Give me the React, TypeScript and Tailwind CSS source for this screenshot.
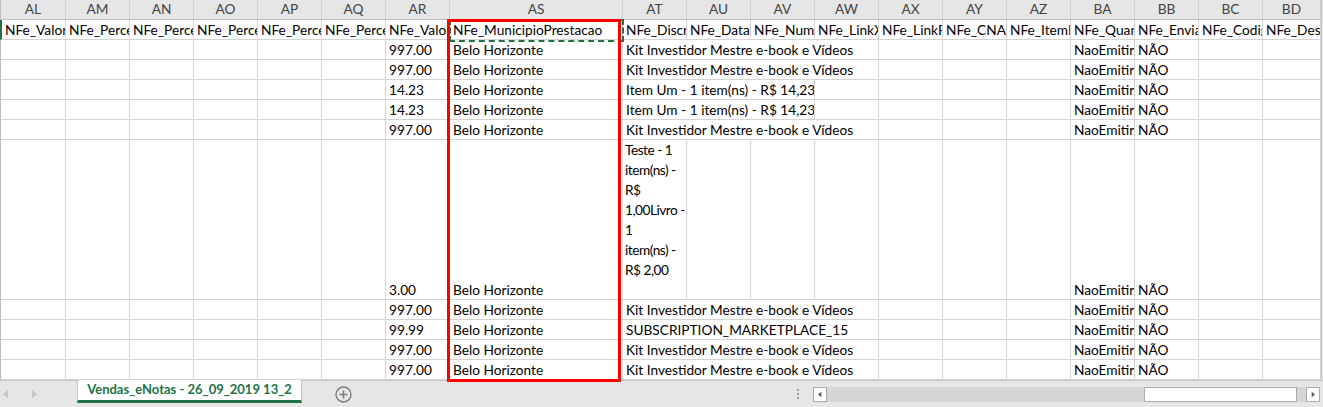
import clsx from 'clsx';

const FONT = "font-['Lato','Liberation_Sans',sans-serif]";

const letters = ['AL', 'AM', 'AN', 'AO', 'AP', 'AQ', 'AR', 'AS', 'AT', 'AU', 'AV', 'AW', 'AX', 'AY', 'AZ', 'BA', 'BB', 'BC', 'BD'];

const headers = [
  'NFe_ValorTotal',
  'NFe_PercentualIR',
  'NFe_PercentualPIS',
  'NFe_PercentualCOFINS',
  'NFe_PercentualCSLL',
  'NFe_PercentualINSS',
  'NFe_ValorISS',
  'NFe_MunicipioPrestacao',
  'NFe_Discriminacao',
  'NFe_Data.Emissao',
  'NFe_Numero',
  'NFe_LinkXml',
  'NFe_LinkPdf',
  'NFe_CNAE',
  'NFe_ItemListaServico',
  'NFe_QuandoEmitir',
  'NFe_EnviarEmail',
  'NFe_CodigoServico',
  'NFe_Descricao',
];

type Row = {
  valor: string;
  municipio: string;
  desc?: string;
  span?: 3 | 4;
  emitir: string;
  tall?: boolean;
};

const KIT = 'Kit Investidor Mestre e-book e Vídeos';
const ITEM = 'Item Um - 1 item(ns) - R$ 14,23';

const rows: Row[] = [
  { valor: '997.00', municipio: 'Belo Horizonte', desc: KIT, span: 4, emitir: 'NaoEmitir' },
  { valor: '997.00', municipio: 'Belo Horizonte', desc: KIT, span: 4, emitir: 'NaoEmitir' },
  { valor: '14.23', municipio: 'Belo Horizonte', desc: ITEM, span: 3, emitir: 'NaoEmitir' },
  { valor: '14.23', municipio: 'Belo Horizonte', desc: ITEM, span: 3, emitir: 'NaoEmitir' },
  { valor: '997.00', municipio: 'Belo Horizonte', desc: KIT, span: 4, emitir: 'NaoEmitir' },
  { valor: '3.00', municipio: 'Belo Horizonte', emitir: 'NaoEmitir', tall: true },
  { valor: '997.00', municipio: 'Belo Horizonte', desc: KIT, span: 4, emitir: 'NaoEmitir' },
  { valor: '99.99', municipio: 'Belo Horizonte', desc: 'SUBSCRIPTION_MARKETPLACE_15', span: 4, emitir: 'NaoEmitir' },
  { valor: '997.00', municipio: 'Belo Horizonte', desc: KIT, span: 4, emitir: 'NaoEmitir' },
  { valor: '997.00', municipio: 'Belo Horizonte', desc: KIT, span: 4, emitir: 'NaoEmitir' },
];

// lines of the wrapped cell in the tall row
const wrapped = ['Teste - 1', 'item(ns) -', 'R$', '1,00Livro -', '1', 'item(ns) -', 'R$ 2,00'];

function Cell({ children, first, tall, span, top }: { children?: React.ReactNode; first?: boolean; tall?: boolean; span?: number; top?: boolean }) {
  return (
    <div
      className={clsx(
        'border-r border-b border-[#d4d4d4] overflow-hidden whitespace-nowrap flex text-[13.7px] text-black',
        tall ? 'h-[160px]' : 'h-[20px]',
        top ? 'items-start leading-[20px] flex-col tracking-[-0.5px] pl-[2px]' : 'items-end leading-[19px] pl-[3px]',
        first && 'border-l border-l-[#bdbdbd]',
        span === 3 && 'col-span-3',
        span === 4 && 'col-span-4',
      )}
    >
      {children}
    </div>
  );
}

function DataRow({ row }: { row: Row }) {
  const cells: React.ReactNode[] = [];
  for (let i = 0; i < 19; i++) {
    if (i === 6) cells.push(<Cell key={i} tall={row.tall}>{row.valor}</Cell>);
    else if (i === 7) cells.push(<Cell key={i} tall={row.tall}>{row.municipio}</Cell>);
    else if (i === 8 && row.tall) {
      cells.push(
        <Cell key={i} tall top>
          {wrapped.map((l, n) => (
            <span key={n} className="block">{l}</span>
          ))}
        </Cell>,
      );
    } else if (i === 8 && row.desc) {
      cells.push(<Cell key={i} span={row.span}>{row.desc}</Cell>);
      i += (row.span ?? 1) - 1;
    } else if (i === 15) cells.push(<Cell key={i} tall={row.tall}>{row.emitir}</Cell>);
    else if (i === 16) cells.push(<Cell key={i} tall={row.tall}>NÃO</Cell>);
    else cells.push(<Cell key={i} first={i === 0} tall={row.tall} />);
  }
  return <>{cells}</>;
}

function Tri({ dir, className }: { dir: 'l' | 'r'; className?: string }) {
  return (
    <svg width="6" height="8" viewBox="0 0 6 8" className={className}>
      {dir === 'l' ? <path d="M5 0 L0 4 L5 8 Z" fill="currentColor" /> : <path d="M1 0 L6 4 L1 8 Z" fill="currentColor" />}
    </svg>
  );
}

export default function App() {
  return (
    <div className={clsx('w-[1323px] h-[407px] bg-white overflow-hidden', FONT)}>
      <div className="relative flex h-[380px]">
        <div className="grid grid-cols-[66px_repeat(6,64px)_173px_repeat(10,64px)_58px] content-start">
          {/* column letters */}
          {letters.map((l, i) => (
            <div
              key={l}
              className={clsx(
                'h-[20px] bg-[#e6e6e6] border-r border-b border-r-[#d0d0d0] border-b-[#bfbfbf] flex items-center justify-center text-[13.7px] text-[#444]',
                i === 0 && 'border-l border-l-[#bdbdbd]',
              )}
            >
              {l}
            </div>
          ))}

          {/* header row */}
          {headers.map((h, i) => (
            <div
              key={h}
              className={clsx(
                'h-[20px] border-r border-b border-[#d4d4d4] overflow-hidden whitespace-nowrap pl-[3px] flex items-end leading-[19px] text-[13.7px] text-black',
                i === 0 && 'border-l-2 border-l-[#217346]',
              )}
            >
              {h}
            </div>
          ))}

          {rows.map((r, n) => (
            <DataRow key={n} row={r} />
          ))}
        </div>
        <div className="flex-1 bg-[#e6e6e6] border-l border-[#c6c6c6]" />

        {/* copied cell (marching ants) */}
        <div className="absolute left-[449px] top-[19px] w-[175px] h-[23px] border-2 border-dashed border-[#217346]" />
        {/* red highlight */}
        <div className="absolute left-[447px] top-[19px] w-[174px] h-[363px] border-[3px] border-[#ff0000]" />
      </div>

      {/* sheet tabs + horizontal scrollbar */}
      <div className="h-[27px] bg-[#e6e6e6] border-t border-[#c6c6c6] flex items-start">
        <div className="w-[77px] h-[26px] flex items-center gap-[22px] pl-[3px] text-[#c6c6c6]">
          <Tri dir="l" />
          <Tri dir="r" />
        </div>
        <div className="w-[225px] h-[23px] bg-white border-x border-[#c6c6c6] border-b-[3px] border-b-[#217346] flex items-center justify-center text-[13px] font-bold text-[#217346] -mt-px">
          Vendas_eNotas - 26_09_2019 13_2
        </div>
        <div className="w-[82px] h-[26px] flex items-center justify-center">
          <svg width="17" height="17" viewBox="0 0 17 17">
            <circle cx="8.5" cy="8.5" r="7.5" fill="none" stroke="#7a7a7a" strokeWidth="1.3" />
            <path d="M8.5 4.5 V12.5 M4.5 8.5 H12.5" stroke="#7a7a7a" strokeWidth="1.5" />
          </svg>
        </div>
        <div className="flex-1 h-[26px] flex items-center justify-end pr-[14px]">
          <div className="flex flex-col gap-[2px]">
            <span className="w-[2px] h-[2px] bg-[#9a9a9a]" />
            <span className="w-[2px] h-[2px] bg-[#9a9a9a]" />
            <span className="w-[2px] h-[2px] bg-[#9a9a9a]" />
          </div>
        </div>
        <div className="w-[507px] h-[15px] mt-[6px] flex bg-[#d6d6d6]">
          <div className="w-[14px] h-[15px] bg-white border border-[#ababab] flex items-center justify-center text-[#555]">
            <Tri dir="l" className="w-[4px] h-[7px]" />
          </div>
          <div className="w-[317px]" />
          <div className="w-[153px] h-[15px] bg-white border border-[#ababab]" />
          <div className="w-[9px]" />
          <div className="w-[14px] h-[15px] bg-white border border-[#ababab] flex items-center justify-center text-[#555]">
            <Tri dir="r" className="w-[4px] h-[7px]" />
          </div>
        </div>
        <div className="w-[3px]" />
      </div>
    </div>
  );
}
